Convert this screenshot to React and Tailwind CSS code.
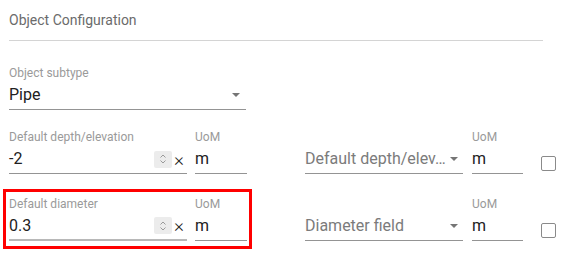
import React from "react";

const Arrow = () => (
  <svg width="8" height="4" viewBox="0 0 8 4" className="shrink-0">
    <path d="M0 0h8L4 4z" fill="#757575" />
  </svg>
);

const Spinner = () => (
  <span className="w-[18px] h-[17px] bg-[#ececec] rounded-[2px] flex items-center justify-center shrink-0">
    <svg width="8" height="12" viewBox="0 0 8 12">
      <path d="M1.5 4.5L4 2l2.5 2.5M1.5 7.5L4 10l2.5-2.5" fill="none" stroke="#9a9a9a" strokeWidth="1" />
    </svg>
  </span>
);

const Label = ({ children }) => (
  <div className="text-[12px] leading-[14px] text-[#9a9a9a] whitespace-nowrap">{children}</div>
);

// numeric text field with spin + clear buttons
const NumberField = ({ label, value, thick }) => (
  <div className="w-[178px] flex flex-col">
    <Label>{label}</Label>
    <div
      className={
        thick
          ? "h-[30px] pt-[1px] flex items-center border-b-2 border-[#b8b8b8]"
          : "h-[30px] pt-[1px] flex items-center border-b border-[#949494]"
      }
    >
      <span className="flex-1 text-[16px] text-[#212121]">{value}</span>
      <Spinner />
      <span className="ml-[2px] mr-[3px] text-[19px] leading-none font-light text-[#222]">×</span>
    </div>
  </div>
);

const Uom = ({ width }) => (
  <div className={`${width} flex flex-col`}>
    <Label>UoM</Label>
    <div className="h-[30px] pt-[1px] flex items-center border-b border-[#949494] text-[16px] text-[#212121]">m</div>
  </div>
);

const FieldSelect = ({ text }) => (
  <div className="w-[158px] flex flex-col">
    <div className="h-[14px]" />
    <div className="h-[30px] pt-[1px] flex items-center border-b border-[#949494] pr-[5px]">
      <span className="flex-1 min-w-0 whitespace-nowrap overflow-hidden text-[16px] text-[#7b7b7b]">{text}</span>
      <span className="ml-[3px] shrink-0">
        <Arrow />
      </span>
    </div>
  </div>
);

const Checkbox = () => (
  <span className="ml-[18px] mb-[3px] w-[15px] h-[15px] border-[1.5px] border-[#8a8a8a] rounded-[2px] bg-white" />
);

export default function App() {
  return (
    <div className="w-[565px] h-[253px] bg-white pl-[9px] pt-[10px] font-['Roboto',sans-serif]">
      {/* Header */}
      <div className="text-[14px] leading-[20px] text-[#6b6b6b]">Object Configuration</div>
      <div className="mt-[10px] w-[534px] h-px bg-[#d4d4d4]" />

      {/* Subtype */}
      <div className="mt-[25px] w-[237px] flex flex-col">
        <Label>Object subtype</Label>
        <div className="h-[30px] pt-[1px] flex items-center border-b border-[#949494] pr-[6px]">
          <span className="flex-1 text-[16px] text-[#212121]">Pipe</span>
          <Arrow />
        </div>
      </div>

      {/* Depth row */}
      <div className="mt-[20px] flex items-end">
        <div className="flex gap-[8px]">
          <NumberField label="Default depth/elevation" value="-2" />
          <Uom width="w-[52px]" />
        </div>
        <div className="ml-[58px]">
          <FieldSelect text="Default depth/elev…" />
        </div>
        <div className="ml-[9px]">
          <Uom width="w-[51px]" />
        </div>
        <Checkbox />
      </div>

      {/* Diameter row */}
      <div className="mt-[23px] flex items-end">
        <div className="relative flex gap-[8px]">
          <NumberField label="Default diameter" value="0.3" thick />
          <Uom width="w-[52px]" />
          <span className="absolute left-[-6px] top-[-8px] w-[249px] h-[60px] border-[3px] border-[#ff0000] pointer-events-none" />
        </div>
        <div className="ml-[58px]">
          <FieldSelect text="Diameter field" />
        </div>
        <div className="ml-[9px]">
          <Uom width="w-[51px]" />
        </div>
        <Checkbox />
      </div>
    </div>
  );
}
